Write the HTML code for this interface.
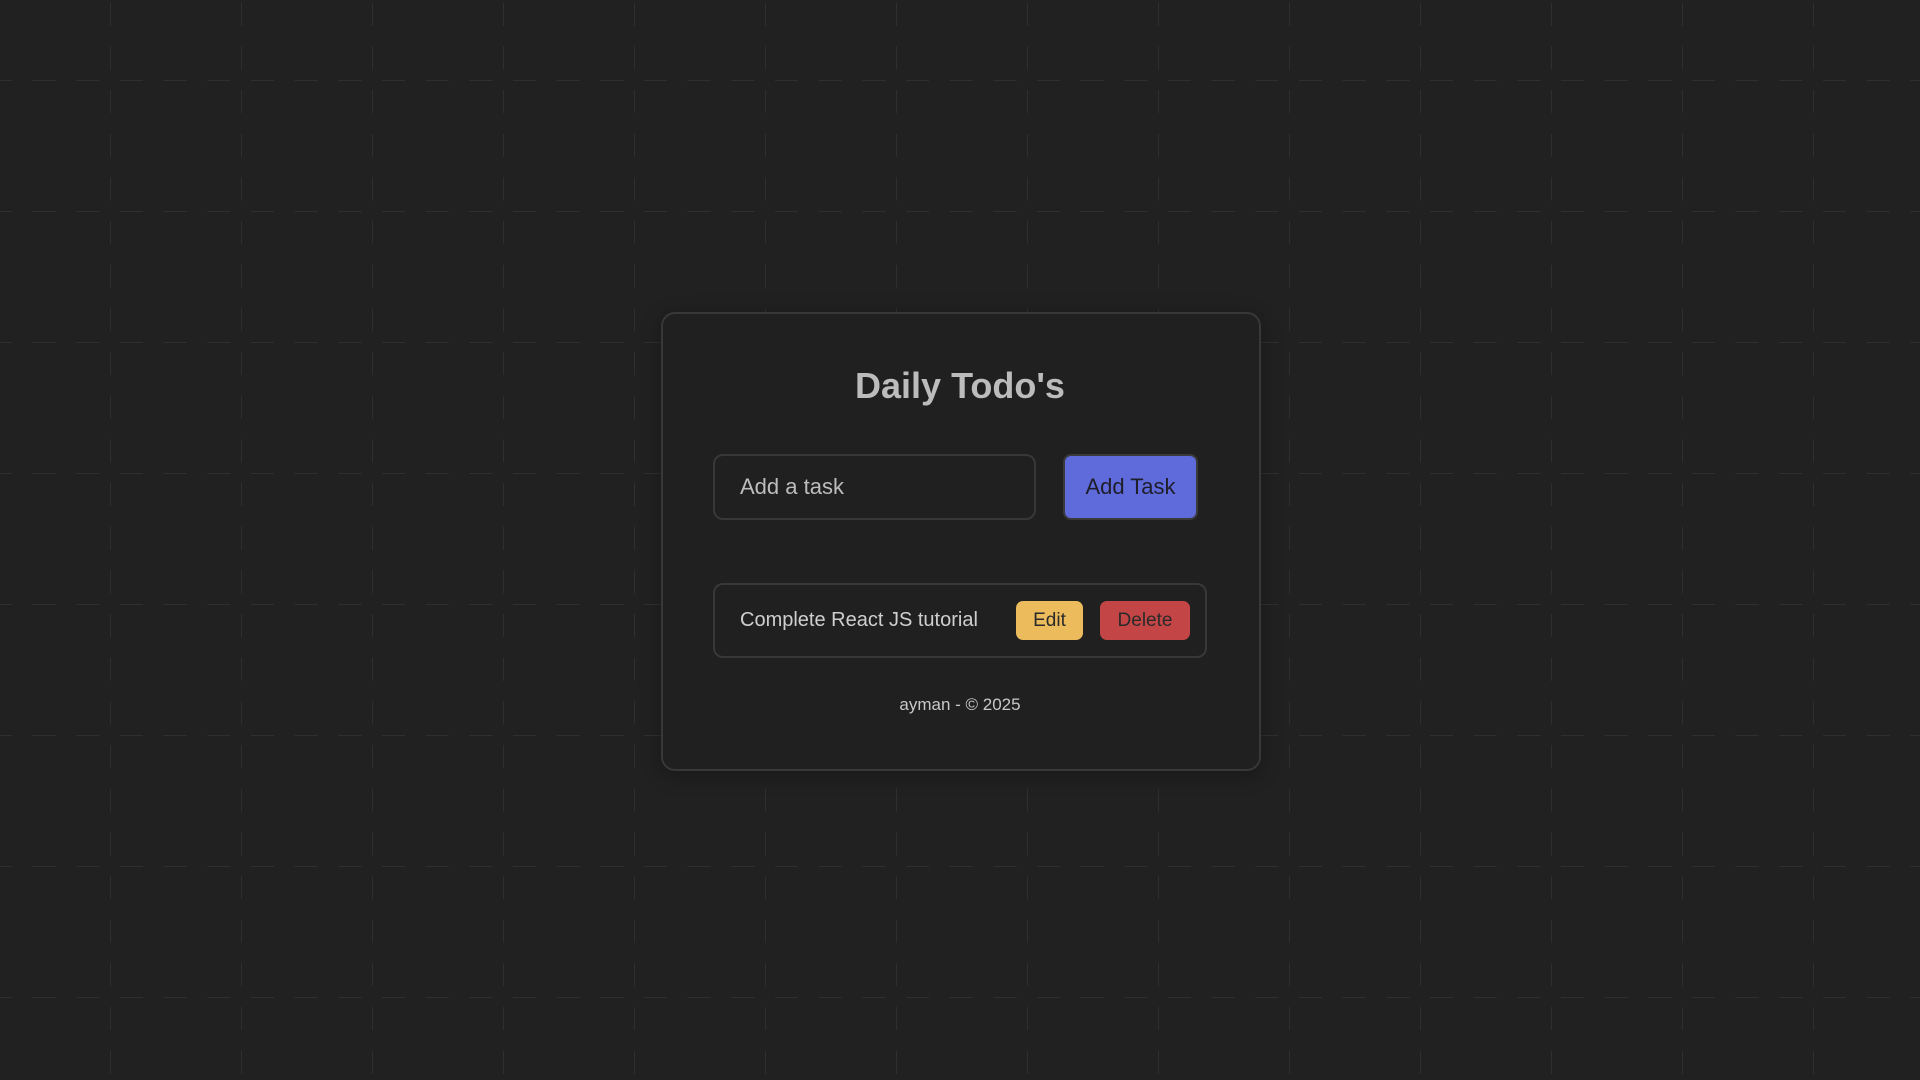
<!DOCTYPE html>
<html><head><meta charset="utf-8"><style>
html,body{margin:0;width:1920px;height:1080px;overflow:hidden;background:#212121;font-family:"Liberation Sans",sans-serif}
.grid{position:absolute;inset:0}
.card{position:absolute;left:661px;top:312px;width:596px;height:455px;border:2px solid #383838;border-radius:14px;background:#202020;box-shadow:0 4px 20px rgba(0,0,0,.3)}
h1{position:absolute;left:0;right:0;top:365px;margin:0;text-align:center;font-size:36px;font-weight:bold;color:#bcbcbc}
.in{position:absolute;left:713px;top:454px;width:319px;height:62px;border:2px solid #383838;border-radius:10px;color:#bdbdbd;font-size:22px;line-height:62px;box-sizing:content-box}
.in span{margin-left:25px}
.btn{position:absolute;left:1063px;top:454px;width:135px;height:66px;background:#5f6bdb;border:2px solid #3a3a3a;box-sizing:border-box;border-radius:8px;color:#1e1e2a;font-size:22px;text-align:center;line-height:62px}
.item{position:absolute;left:713px;top:583px;width:490px;height:71px;border:2px solid #383838;border-radius:10px}
.item .t{position:absolute;left:25px;top:0;line-height:71px;font-size:20px;color:#cfcfcf}
.b{position:absolute;top:16px;height:39px;border-radius:7px;font-size:19px;line-height:39px;text-align:center;color:#2a2a2a}
.foot{position:absolute;left:0;right:0;top:695px;text-align:center;font-size:17px;color:#c8c8c8}
</style></head><body>
<svg class="grid" width="1920" height="1080">
<defs><pattern id="p" x="110" y="80" width="131" height="131" patternUnits="userSpaceOnUse">
<line x1="0" y1="0" x2="0" y2="131" stroke="#2f2f2f" stroke-width="2" stroke-dasharray="23 20.7" stroke-dashoffset="-10"/>
<line x1="0" y1="0" x2="131" y2="0" stroke="#2f2f2f" stroke-width="2" stroke-dasharray="23 20.7" stroke-dashoffset="-10"/>
</pattern></defs>
<rect width="1920" height="1080" fill="url(#p)"/>
</svg>
<div class="card"></div>
<h1>Daily Todo's</h1>
<div class="in"><span>Add a task</span></div>
<div class="btn">Add Task</div>
<div class="item"><div class="t">Complete React JS tutorial</div>
<div class="b" style="left:301px;width:67px;background:#ebbb5c">Edit</div>
<div class="b" style="left:385px;width:90px;background:#c44545">Delete</div></div>
<div class="foot">ayman - © 2025</div>
</body></html>
